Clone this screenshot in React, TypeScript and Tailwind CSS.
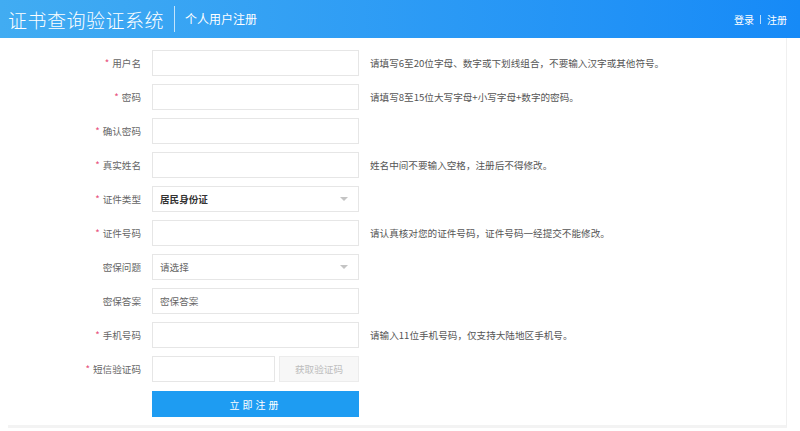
const font = "font-['Microsoft_YaHei','Noto_Sans_CJK_SC',sans-serif]";

type Row = {
  label: string;
  required?: boolean;
  kind?: "input" | "select" | "sms";
  value?: string;
  bold?: boolean;
  hint?: string;
};

const rows: Row[] = [
  { label: "用户名", required: true, hint: "请填写6至20位字母、数字或下划线组合，不要输入汉字或其他符号。" },
  { label: "密码", required: true, hint: "请填写8至15位大写字母+小写字母+数字的密码。" },
  { label: "确认密码", required: true },
  { label: "真实姓名", required: true, hint: "姓名中间不要输入空格，注册后不得修改。" },
  { label: "证件类型", required: true, kind: "select", value: "居民身份证", bold: true },
  { label: "证件号码", required: true, hint: "请认真核对您的证件号码，证件号码一经提交不能修改。" },
  { label: "密保问题", kind: "select", value: "请选择" },
  { label: "密保答案", value: "密保答案" },
  { label: "手机号码", required: true, hint: "请输入11位手机号码，仅支持大陆地区手机号。" },
  { label: "短信验证码", required: true, kind: "sms" },
];

function Field({ row }: { row: Row }) {
  if (row.kind === "sms") {
    return (
      <div className="flex w-[207px] gap-[4px]">
        <div className="h-[26px] w-[123px] border border-[#e6e6e6] bg-white" />
        <div className="flex h-[26px] flex-1 items-center justify-center border border-[#ececec] bg-[#f7f7f7] text-[9.6px] text-[#bdbdbd]">
          获取验证码
        </div>
      </div>
    );
  }
  return (
    <div className="flex h-[26px] w-[207px] items-center justify-between border border-[#e6e6e6] bg-white px-[7px]">
      <span className={row.bold ? "font-bold text-[#333]" : "text-[#666]"}>{row.value}</span>
      {row.kind === "select" && (
        <span className="mr-[3px] h-0 w-0 border-x-[4px] border-t-[4px] border-x-transparent border-t-[#c4c4c4]" />
      )}
    </div>
  );
}

export default function App() {
  return (
    <div className={`h-[431px] w-[800px] overflow-hidden bg-white ${font}`}>
      <header className="flex h-[38px] items-center bg-gradient-to-r from-[#41acf2] to-[#168af7] pl-[8px] pr-[13px] text-white">
        <h1 className="text-[19px] font-light leading-none tracking-[0.5px]">证书查询验证系统</h1>
        <div className="mx-[10px] h-[26px] w-px bg-white/70" />
        <span className="text-[12px]">个人用户注册</span>
        <div className="ml-auto flex items-center gap-[6px] text-[10px]">
          <span>登录</span>
          <span className="h-[9px] w-px bg-white/70" />
          <span>注册</span>
        </div>
      </header>

      <div className="ml-[8px] mr-[13px] h-[390px] border-r border-b-[3px] border-r-[#f0f0f0] border-b-[#f3f3f3]">
        <div className="flex flex-col gap-[8px] pt-[12px] text-[9.6px]">
          {rows.map((row) => (
            <div key={row.label} className="flex items-center">
              <label className="w-[144px] pr-[11px] text-right text-[#666]">
                {row.required && <span className="mr-[3px] text-[#e8507c]">*</span>}
                {row.label}
              </label>
              <Field row={row} />
              {row.hint && <span className="ml-[11px] text-[#555]">{row.hint}</span>}
            </div>
          ))}
          <div className="flex">
            <div className="w-[144px]" />
            <button className="mt-[1px] h-[26px] w-[207px] bg-[#1e9cf2] text-[10px] tracking-[3px] text-white">
              立即注册
            </button>
          </div>
        </div>
      </div>
    </div>
  );
}
